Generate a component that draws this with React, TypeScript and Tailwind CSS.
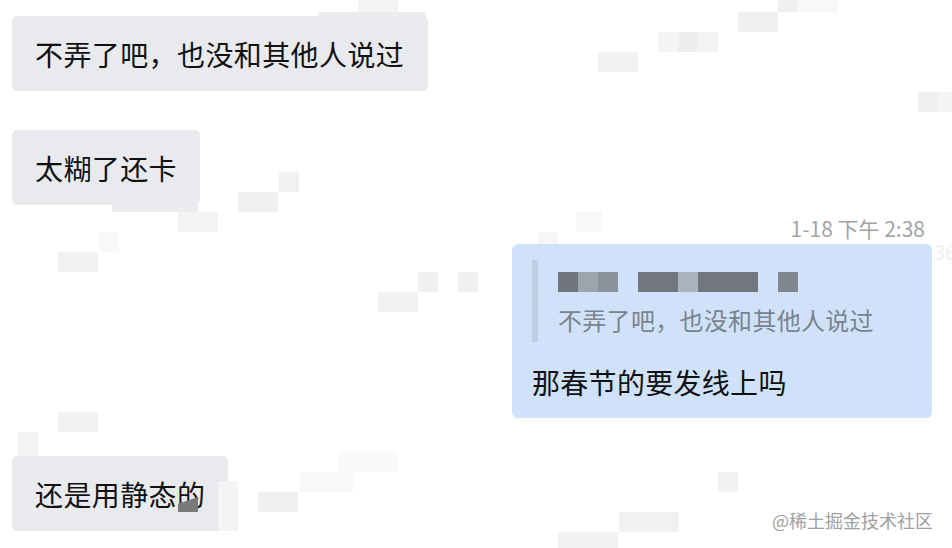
import type { ReactElement } from 'react';

type Block = { x: number; y: number; w: number; h: number; c: string };

// pixelation artifacts scattered over the capture
const mosaic: Block[] = [
  { x: 358, y: 0, w: 40, h: 12, c: '#f3f3f3' },
  { x: 778, y: 0, w: 20, h: 12, c: '#f0f0f0' },
  { x: 798, y: 0, w: 40, h: 12, c: '#f8f8f8' },
  { x: 738, y: 12, w: 40, h: 20, c: '#efefef' },
  { x: 658, y: 32, w: 20, h: 20, c: '#f5f5f5' },
  { x: 678, y: 32, w: 20, h: 20, c: '#eeeeee' },
  { x: 698, y: 32, w: 20, h: 20, c: '#f3f3f3' },
  { x: 598, y: 52, w: 40, h: 20, c: '#f2f2f2' },
  { x: 918, y: 92, w: 20, h: 20, c: '#efefef' },
  { x: 938, y: 92, w: 14, h: 20, c: '#f5f5f5' },
  { x: 318, y: 12, w: 108, h: 5, c: '#ececee' },
  { x: 279, y: 172, w: 20, h: 20, c: '#f1f1f1' },
  { x: 238, y: 192, w: 40, h: 20, c: '#efefef' },
  { x: 112, y: 205, w: 86, h: 7, c: '#ececee' },
  { x: 178, y: 212, w: 40, h: 20, c: '#f3f3f3' },
  { x: 99, y: 232, w: 20, h: 20, c: '#f8f8f8' },
  { x: 58, y: 252, w: 40, h: 20, c: '#f1f1f1' },
  { x: 576, y: 212, w: 26, h: 20, c: '#f8f8f8' },
  { x: 538, y: 232, w: 20, h: 12, c: '#f6f6f6' },
  { x: 418, y: 272, w: 20, h: 20, c: '#f0f0f0' },
  { x: 458, y: 272, w: 20, h: 20, c: '#f0f0f0' },
  { x: 378, y: 292, w: 40, h: 20, c: '#f2f2f2' },
  { x: 58, y: 412, w: 40, h: 20, c: '#f2f2f2' },
  { x: 18, y: 432, w: 20, h: 24, c: '#f3f3f4' },
  { x: 338, y: 452, w: 60, h: 20, c: '#f9f9f9' },
  { x: 300, y: 472, w: 53, h: 20, c: '#f8f8f8' },
  { x: 718, y: 472, w: 20, h: 20, c: '#f2f2f2' },
  { x: 218, y: 481, w: 20, h: 50, c: '#f3f4f5' },
  { x: 258, y: 492, w: 40, h: 20, c: '#efefef' },
  { x: 619, y: 512, w: 60, h: 20, c: '#f1f1f1' },
  { x: 558, y: 532, w: 60, h: 16, c: '#f2f2f2' },
];

const nameCells = [
  { w: 20, c: '#70757d' },
  { w: 20, c: '#9ca4ae' },
  { w: 20, c: '#8a929c' },
  { w: 20, c: 'transparent' },
  { w: 40, c: '#72777f' },
  { w: 20, c: '#a9b3bf' },
  { w: 60, c: '#72777f' },
  { w: 20, c: 'transparent' },
  { w: 20, c: '#80868f' },
];

function GrayBubble({ text, width }: { text: string; width: string }): ReactElement {
  return (
    <div className={`flex h-[75px] items-center self-start rounded-[5px] bg-[#e9eaed] pl-[23px] text-[28px] leading-[36px] tracking-[0.4px] text-[#111] ${width}`}>
      {text}
    </div>
  );
}

export default function App(): ReactElement {
  return (
    <div
      className="relative h-[548px] w-[952px] overflow-hidden bg-white"
      style={{ fontFamily: '"Noto Sans CJK SC", "Noto Sans", sans-serif' }}
    >
      <div className="flex flex-col px-[12px] pt-[16px]">
        <GrayBubble text="不弄了吧，也没和其他人说过" width="w-[416px]" />
        <div className="mt-[39px] flex">
          <GrayBubble text="太糊了还卡" width="w-[188px]" />
        </div>

        <div className="mt-[11px] mr-[15px] h-[25px] self-end text-[21px] leading-[25px] text-[#a3a3a3]">
          1-18 下午 2:38
        </div>

        <div className="mt-[3px] mr-[8px] flex h-[174px] w-[420px] flex-col self-end rounded-[6px] bg-[#cfe2fa] px-[20px] pt-[16px]">
          <div className="flex h-[82px] flex-col border-l-[6px] border-[#bfcfe2] pl-[20px] pt-[12px]">
            <div className="flex h-[20px]">
              {nameCells.map((cell, i) => (
                <div key={i} className="h-[20px]" style={{ width: cell.w, backgroundColor: cell.c }} />
              ))}
            </div>
            <div className="mt-[12px] text-[24px] leading-[32px] tracking-[0.3px] text-[#7b838d]">不弄了吧，也没和其他人说过</div>
          </div>
          <div className="mt-[22px] text-[28px] leading-[36px] tracking-[0.3px] text-[#111]">那春节的要发线上吗</div>
        </div>

        <div className="mt-[38px] flex">
          <GrayBubble text="还是用静态的" width="w-[216px]" />
        </div>
      </div>

      {mosaic.map((b, i) => (
        <div
          key={i}
          className="absolute"
          style={{ left: b.x, top: b.y, width: b.w, height: b.h, backgroundColor: b.c }}
        />
      ))}

      <div
        className="absolute left-[178px] top-[497px] h-[15px] w-[20px] bg-[#7a7a7a]"
        style={{ clipPath: 'polygon(100% 0, 100% 100%, 0 100%, 0 45%)' }}
      />

      <div className="absolute left-[934px] top-[240px] text-[20px] leading-[24px] text-[#efefef]">36</div>

      <div className="absolute left-[772px] top-[508px] text-[18px] leading-[24px] text-[#a0a0a0]">
        @稀土掘金技术社区
      </div>
    </div>
  );
}
